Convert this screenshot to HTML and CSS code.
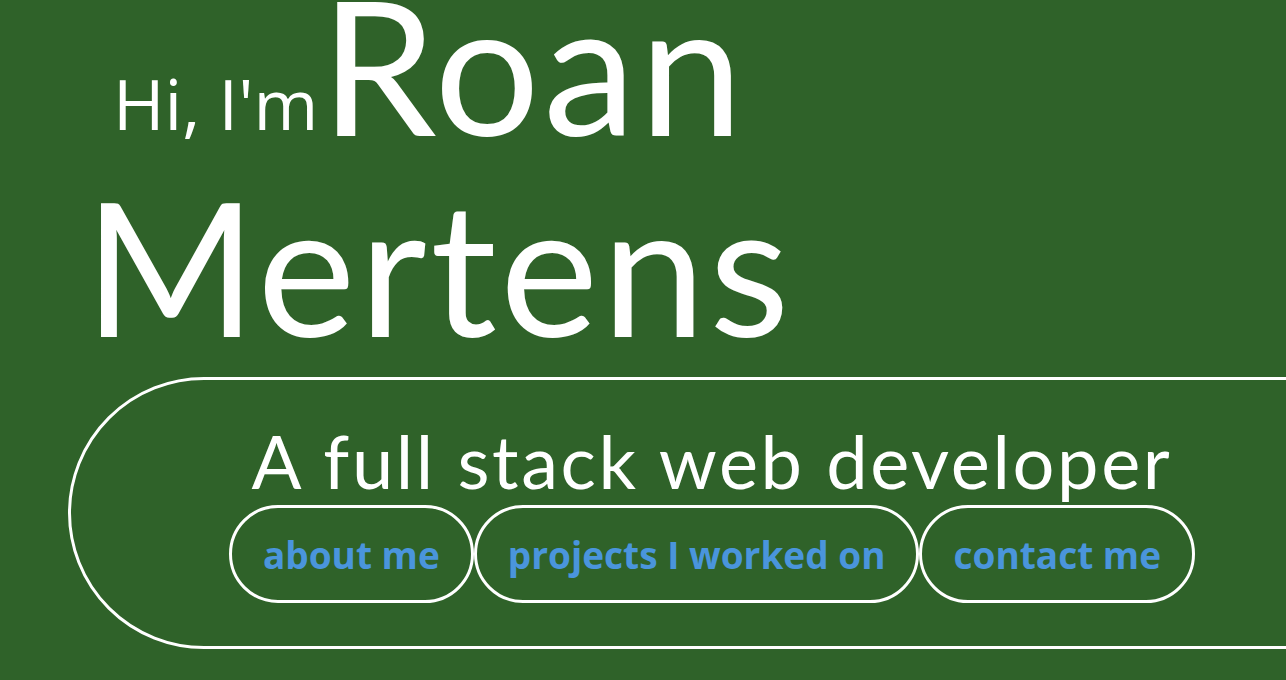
FILE: index.html
```html
<!DOCTYPE html>
<html lang="en">
<head>
<meta charset="utf-8">
<title>Roan Mertens</title>
<link rel="stylesheet" href="styles.css">
</head>
<body>
<header class="intro">
  <h1 class="name"><span class="greet">Hi, I'm</span>Roan<br>Mertens</h1>
</header>
<section class="pill">
  <p class="tagline">A full stack web developer</p>
  <nav class="links">
    <a class="btn" href="#about">about me</a>
    <a class="btn" href="#projects">projects I worked on</a>
    <a class="btn" href="#contact">contact me</a>
  </nav>
</section>
</body>
</html>
```
FILE: styles.css
```css
html, body {
  margin: 0;
  padding: 0;
  background: #2f6229;
  overflow: hidden;
}
body {
  width: 1286px;
  height: 680px;
  color: #ffffff;
  font-family: "Lato", "Open Sans", sans-serif;
}
.intro {
  padding-left: 84px;
}
.name {
  margin: -36px 0 0 0;
  font-family: "Lato", sans-serif;
  font-weight: 400;
  font-size: 186px;
  line-height: 201px;
  letter-spacing: 3.5px;
  white-space: nowrap;
}
.greet {
  font-family: "Open Sans", sans-serif;
  font-size: 70px;
  line-height: 1;
  font-weight: 400;
  letter-spacing: 0;
  margin-left: 29px;
  margin-right: 2px;
  vertical-align: 6px;
}
.pill {
  margin: 11px 0 0 68px;
  width: 1500px;
  height: 272px;
  box-sizing: border-box;
  border: 3px solid #ffffff;
  border-radius: 136px;
  padding: 44px 212px 0 0;
  display: flex;
  flex-direction: column;
  align-items: center;
}
.tagline {
  margin: 0;
  font-family: "Lato", sans-serif;
  font-size: 74px;
  line-height: 74px;
  letter-spacing: 2.6px;
  white-space: nowrap;
}
.links {
  margin-top: 7px;
  display: flex;
  gap: 0;
}
.btn {
  height: 98px;
  box-sizing: border-box;
  display: flex;
  align-items: center;
  padding: 0 31px;
  border: 3px solid #ffffff;
  border-radius: 49px;
  font-family: "Open Sans", sans-serif;
  font-weight: 700;
  font-size: 37px;
  color: #4a95dc;
  text-decoration: none;
  white-space: nowrap;
}
```
